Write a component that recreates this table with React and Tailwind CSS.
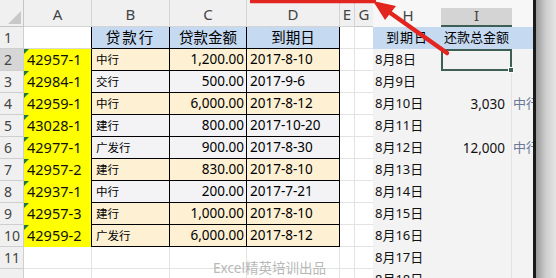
const rows = [
  ['42957-1', '中行', '1,200.00', '2017-8-10', true],
  ['42984-1', '交行', '500.00', '2017-9-6', false],
  ['42959-1', '中行', '6,000.00', '2017-8-12', true],
  ['43028-1', '建行', '800.00', '2017-10-20', false],
  ['42977-1', '广发行', '900.00', '2017-8-30', false],
  ['42957-2', '建行', '830.00', '2017-8-10', true],
  ['42937-1', '中行', '200.00', '2017-7-21', false],
  ['42957-3', '建行', '1,000.00', '2017-8-10', true],
  ['42959-2', '广发行', '6,000.00', '2017-8-12', true],
];

const sums = { 4: '3,030', 6: '12,000' };

const font = "font-['Noto_Sans','Noto_Sans_CJK_SC',sans-serif]";

const ColHead = ({ children, last }) => (
  <div className={`flex items-end justify-center bg-[#f0f0f0] border-b border-[#c6c6c6] text-[15px] leading-none text-[#444] ${last ? '' : 'border-r border-[#d4d4d4]'}`}>
    <span className="pb-[4px]">{children}</span>
  </div>
);

const RowHead = ({ n, active }) => (
  <div className={`flex items-center pl-[4px] border-r border-b border-[#cfcfcf] text-[14px] text-[#444] ${active ? 'bg-[#d6d6d6]' : 'bg-[#f0f0f0]'}`}>
    {n}
  </div>
);

const Blank = ({ last }) => (
  <div className={last ? 'border-b border-[#e3e3e3]' : 'border-r border-b border-[#e3e3e3]'} />
);

const Left = () => (
  <div className="relative grid w-[373px] shrink-0 grid-cols-[24px_68px_78px_77px_93px_15px_18px] grid-rows-[27px_repeat(12,22px)] bg-white">
    <div className="relative bg-[#f0f0f0] border-r border-b border-[#c6c6c6]">
      <svg width="13" height="13" className="absolute left-[8px] top-[11px]"><polygon points="13,0 13,13 0,13" fill="#c8c8c8" /></svg>
    </div>
    <ColHead>A</ColHead>
    <ColHead>B</ColHead>
    <ColHead>C</ColHead>
    <ColHead>D</ColHead>
    <ColHead>E</ColHead>
    <ColHead last>G</ColHead>

    <RowHead n="1" />
    <div className="border-r border-black border-b border-b-[#d9d9d9] bg-white" />
    <div className="flex items-center justify-center border-r border-b border-black bg-[#c5d9f1] text-[14.5px] tracking-[2px]">贷款行</div>
    <div className="flex items-center justify-center border-r border-b border-black bg-[#c5d9f1] text-[14.5px]">贷款金额</div>
    <div className="flex items-center justify-center border-r border-b border-black bg-[#c5d9f1] text-[14.5px]">到期日</div>
    <Blank />
    <Blank last />

    {rows.map(([a, b, c, d, hot], i) => (
      <div key={a + i} className="contents">
        <RowHead n={i + 2} active={i === 0} />
        <div className="relative flex items-center pl-[3px] bg-[#ffff00] border-r border-black text-[14.5px] text-[#111]">
          <svg width="5" height="5" className="absolute left-0 top-0"><polygon points="0,0 5,0 0,5" fill="#1f7a3a" /></svg>
          {a}
        </div>
        <div className={`flex items-center pl-[4px] border-r border-b border-black text-[11.5px] ${hot ? 'bg-[#fdf0d3]' : 'bg-[#f3f3f5]'}`}>{b}</div>
        <div className={`flex items-center justify-end pr-[2px] border-r border-b border-black text-[13.5px] ${hot ? 'bg-[#fdf0d3]' : 'bg-[#f3f3f5]'}`}>{c}</div>
        <div className={`flex items-center pl-[3px] border-r border-b border-black text-[13.5px] ${hot ? 'bg-[#fdf0d3]' : 'bg-[#f3f3f5]'}`}>{d}</div>
        <Blank />
        <Blank last />
      </div>
    ))}

    {[11, 12].map((n) => (
      <div key={n} className="contents">
        <RowHead n={n === 11 ? 11 : ''} />
        <Blank />
        <Blank />
        <Blank />
        <Blank />
        <Blank />
        <Blank last />
      </div>
    ))}

    <div className="absolute left-[213px] top-[258px] text-[13.5px] text-[#b8b8b8]">Excel精英培训出品</div>
  </div>
);

const Right = () => (
  <div className="grid w-[160px] shrink-0 grid-cols-[68px_71px_21px] grid-rows-[27px_repeat(12,22px)] bg-[#f3f3f3]">
    <div className="flex items-end justify-center bg-[#f7f7f7] pb-[4px] pl-[2px] text-[15px] leading-none text-[#444]">H</div>
    <div className="flex flex-col bg-[#f7f7f7]">
      <div className="h-[8px]" />
      <div className="flex flex-1 items-end justify-center border-b-2 border-[#3f5f55] bg-[#d4d4d4] pb-[2px] text-[15px] leading-none text-[#444]">I</div>
    </div>
    <div className="bg-[#f7f7f7]" />

    <div className="flex items-center justify-center bg-[#c5d9f1] text-[13px] tracking-[1px]">到期日</div>
    <div className="flex items-center justify-center bg-[#c5d9f1] text-[13px]">还款总金额</div>
    <div className="bg-[#c5d9f1]" />

    {Array.from({ length: 11 }, (_, i) => i + 2).map((r) => (
      <div key={r} className="contents">
        <div className="flex items-center pl-[2px] text-[13px] text-[#111]">8月{r + 6}日</div>
        {r === 2 ? (
          <div className="relative border-2 border-[#3f5f55] bg-[#f3f3f3]">
            <div className="absolute -bottom-[4px] -right-[4px] h-[6px] w-[6px] border border-white bg-[#3f5f55]" />
          </div>
        ) : (
          <div className="flex items-center justify-end border-r border-[#e2e2e2] pr-[6px] text-[13.5px] text-[#111]">{sums[r]}</div>
        )}
        <div className="flex items-center overflow-hidden whitespace-nowrap pl-[1px] text-[13px] text-[#6a7797]">{sums[r] ? '中行' : ''}</div>
      </div>
    ))}
  </div>
);

export default function App() {
  return (
    <div className={`relative flex h-[278px] w-[556px] overflow-hidden bg-white ${font}`}>
      <Left />
      <Right />
      <div className="w-[3px] shrink-0 bg-[#1a1a1a]" />
      <div className="flex-1 bg-gradient-to-r from-[#9a9a9a] via-[#cfcfcf] to-[#e4e4e4]" />

      <svg className="absolute left-0 top-0" width="556" height="278" viewBox="0 0 556 278">
        <line x1="250" y1="1.5" x2="376" y2="1.5" stroke="#e2261f" strokeWidth="3.5" />
        <line x1="389" y1="12" x2="447" y2="53" stroke="#e2261f" strokeWidth="4.5" strokeLinecap="round" />
        <polygon points="373,1 396,6 385,20" fill="#e2261f" />
      </svg>
    </div>
  );
}
